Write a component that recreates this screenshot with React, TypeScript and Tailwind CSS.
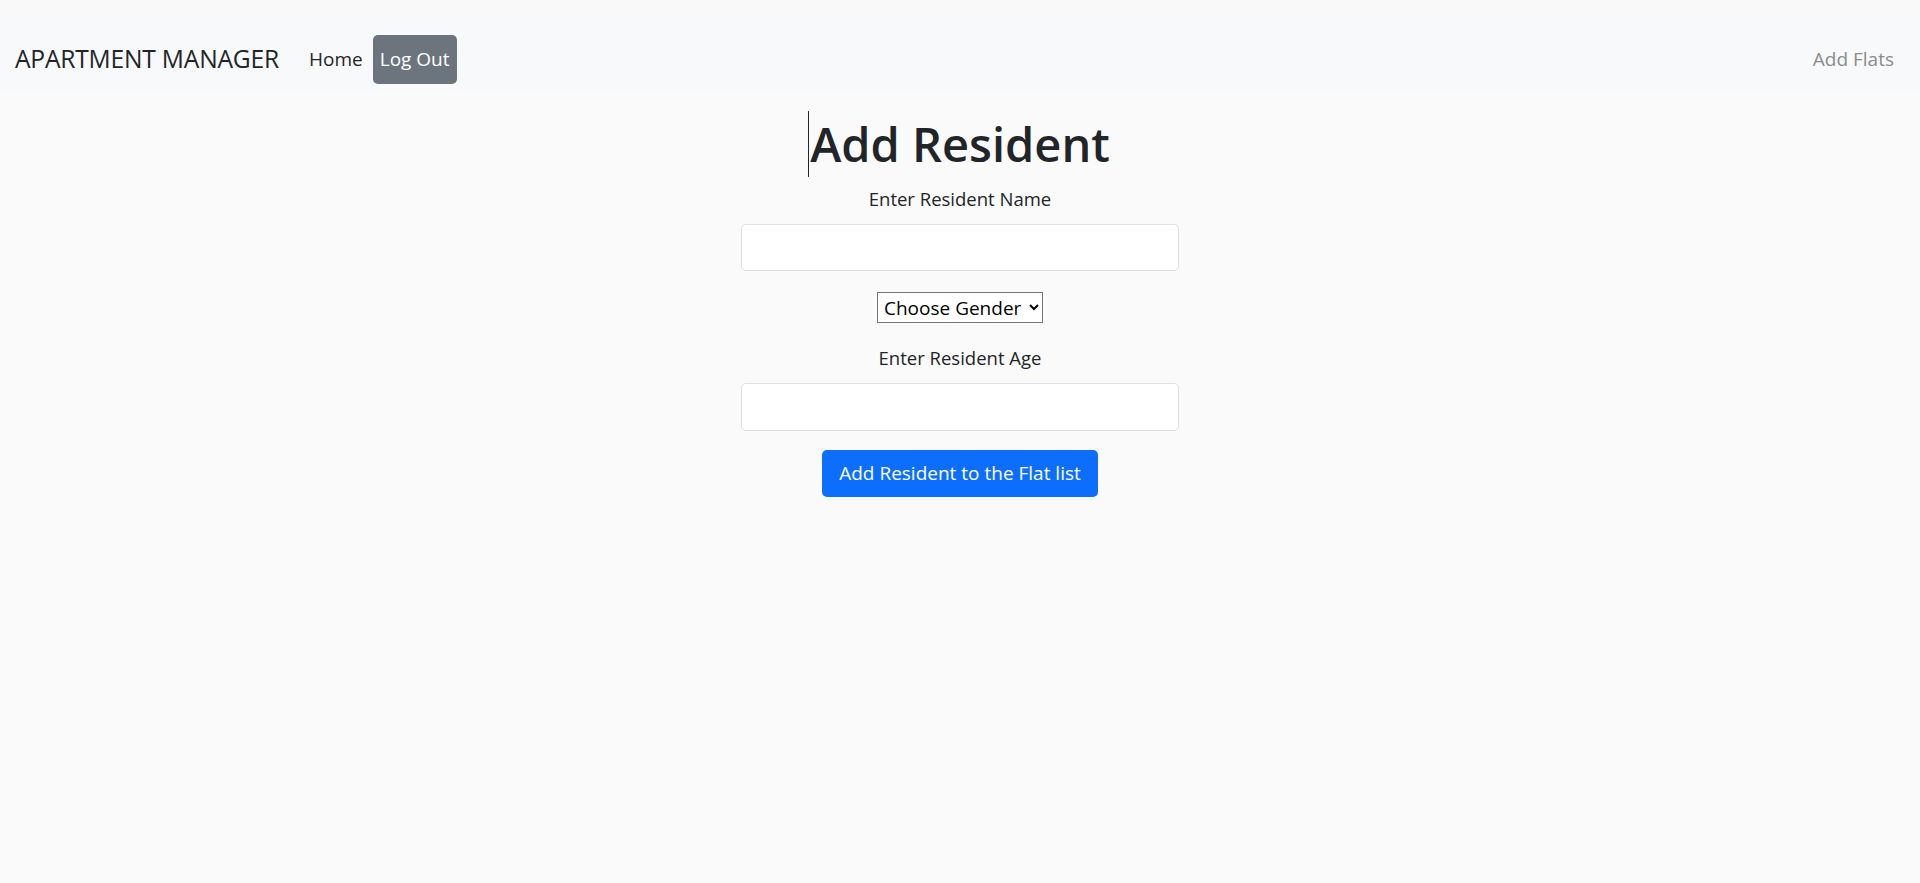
import React from 'react';

export default function App() {
  return (
    <div className="min-h-screen bg-[#fafafa] text-[#212529]" style={{ fontFamily: '"Open Sans", "Noto Sans", sans-serif' }}>
      <div className="h-[24px] bg-[#f9f9fa]" />

      {/* NAVBAR */}
      <nav className="h-[70px] bg-[#f8f9fa] flex items-center justify-between px-[15px]">
        <div className="flex items-center">
          <span className="text-[24.6px] leading-[30px] text-[#212529] mr-[20px] tracking-[-0.2px]">APARTMENT MANAGER</span>
          <a className="px-[10px] h-[50px] flex items-center text-[19px] text-[#212529]">Home</a>
          <a className="px-[6px] h-[49px] w-[84px] flex items-center justify-center text-[19px] text-white bg-[#6c757d] rounded-[5px]">Log Out</a>
        </div>
        <a className="px-[10px] text-[19px] text-[#8a8c8e] mr-[1px]">Add Flats</a>
      </nav>

      {/* FORM */}
      <div className="flex flex-col items-center">
        <div className="relative mt-[17px] h-[66px] flex items-center">
          <span className="absolute left-[-2px] top-0 w-[1px] h-[66px] bg-[#212529]" />
          <h1 className="text-[47px] leading-[60px] font-semibold">Add Resident</h1>
        </div>
        <label className="mt-[8px] text-[18.5px] leading-[28px]">Enter Resident Name</label>
        <input type="text" className="mt-[11px] w-[438px] h-[47px] bg-white border border-[#dee2e6] rounded-[5px]" />
        <select className="mt-[21px] h-[31px] w-[166px] border border-[#767676] bg-white text-[19px] text-black px-[2px]" style={{ fontFamily: '"Open Sans", sans-serif' }}>
          <option>Choose Gender</option>
          <option>Male</option>
          <option>Female</option>
        </select>
        <label className="mt-[21px] text-[18.5px] leading-[28px]">Enter Resident Age</label>
        <input type="text" className="mt-[11px] w-[438px] h-[48px] bg-white border border-[#dee2e6] rounded-[5px]" />
        <button className="mt-[19px] w-[276px] h-[47px] bg-[#0d6efd] text-white text-[19px] rounded-[5px]">Add Resident to the Flat list</button>
      </div>
    </div>
  );
}
